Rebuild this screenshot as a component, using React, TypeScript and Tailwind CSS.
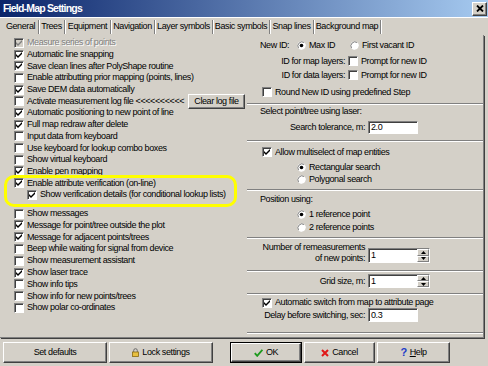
import React from 'react';

type Item = { label: string; checked?: boolean; disabled?: boolean; indent?: boolean; logButton?: boolean };

const groupA: Item[] = [
  { label: 'Measure series of points', checked: true, disabled: true },
  { label: 'Automatic line snapping', checked: true },
  { label: 'Save clean lines after PolyShape routine', checked: true },
  { label: 'Enable attributting prior mapping (points, lines)' },
  { label: 'Save DEM data automatically', checked: true },
  { label: 'Activate measurement log file <<<<<<<<<<', logButton: true },
  { label: 'Automatic positioning to new point of line', checked: true },
  { label: 'Full map redraw after delete', checked: true },
  { label: 'Input data from keyboard' },
  { label: 'Use keyboard for lookup combo boxes' },
  { label: 'Show virtual keyboard' },
  { label: 'Enable pen mapping', checked: true },
  { label: 'Enable attribute verification (on-line)', checked: true },
  { label: 'Show verification details (for conditional lookup lists)', checked: true, indent: true },
];

const groupB: Item[] = [
  { label: 'Show messages' },
  { label: 'Message for point/tree outside the plot', checked: true },
  { label: 'Message for adjacent points/trees', checked: true },
  { label: 'Beep while waiting for signal from device' },
  { label: 'Show measurement assistant' },
  { label: 'Show laser trace', checked: true },
  { label: 'Show info tips' },
  { label: 'Show info for new points/trees' },
  { label: 'Show polar co-ordinates' },
];

const tabs: [string, string][] = [
  ['General', 'w-[35px]'],
  ['Trees', 'w-[25px]'],
  ['Equipment', 'w-[45px]'],
  ['Navigation', 'w-[43px]'],
  ['Layer symbols', 'w-[57px]'],
  ['Basic symbols', 'w-[56px]'],
  ['Snap lines', 'w-[43px]'],
  ['Background map', 'w-[66px]'],
];

function Box({ checked, disabled }: { checked?: boolean; disabled?: boolean }) {
  return (
    <span
      className={`flex items-center justify-center w-[10px] h-[10px] shrink-0 border border-t-[#808080] border-l-[#808080] border-b-white border-r-white shadow-[inset_1px_1px_0_#404040] ${
        disabled ? 'bg-[#d4d0c8]' : 'bg-white'
      }`}
    >
      {checked && (
        <svg width="8" height="8" viewBox="0 0 8 8">
          <path d="M1 3 L3 5 L7 1 L7 3 L3 7 L1 5 Z" fill={disabled ? '#808080' : '#000'} />
        </svg>
      )}
    </span>
  );
}

function Radio({ on }: { on?: boolean }) {
  return (
    <svg width="9" height="9" viewBox="0 0 9 9" className="shrink-0">
      <circle cx="4.5" cy="4.5" r="4" fill="#fff" />
      <path d="M1.7 7.3 A4 4 0 0 1 7.3 1.7" fill="none" stroke="#808080" strokeWidth="1" />
      <path d="M7.3 1.7 A4 4 0 0 1 1.7 7.3" fill="none" stroke="#fff" strokeWidth="1" />
      {on && <circle cx="4.5" cy="4.5" r="1.8" fill="#000" />}
    </svg>
  );
}

function Field({ value, className }: { value: string; className: string }) {
  return (
    <div
      className={`flex items-center pl-[2px] bg-white border border-t-[#808080] border-l-[#808080] border-b-white border-r-white shadow-[inset_1px_1px_0_#404040] ${className}`}
    >
      {value}
    </div>
  );
}

function SpinField({ value, className }: { value: string; className: string }) {
  return (
    <div
      className={`flex bg-white border border-t-[#808080] border-l-[#808080] border-b-white border-r-white shadow-[inset_1px_1px_0_#404040] ${className}`}
    >
      <div className="flex-1 flex items-center pl-[2px]">{value}</div>
      <div className="w-[12px] flex flex-col">
        <div className="flex-1 flex items-center justify-center bg-[#d4d0c8] border border-t-white border-l-white border-b-[#808080] border-r-[#808080]">
          <svg width="5" height="3" viewBox="0 0 5 3">
            <path d="M0 3 L2.5 0 L5 3 Z" fill="#000" />
          </svg>
        </div>
        <div className="flex-1 flex items-center justify-center bg-[#d4d0c8] border border-t-white border-l-white border-b-[#808080] border-r-[#808080]">
          <svg width="5" height="3" viewBox="0 0 5 3">
            <path d="M0 0 L5 0 L2.5 3 Z" fill="#000" />
          </svg>
        </div>
      </div>
    </div>
  );
}

function Separator() {
  return <div className="h-0 shrink-0 border-t border-b border-t-[#808080] border-b-white" />;
}

function LeftRow({ item, h }: { item: Item; h: string }) {
  return (
    <div className={`flex items-center gap-[3px] whitespace-nowrap ${h} ${item.indent ? 'pl-[13px]' : ''}`}>
      <Box checked={item.checked} disabled={item.disabled} />
      {item.logButton ? (
        <>
          <span className="w-[158px]">{item.label}</span>
          <button className="w-[57px] h-[15px] flex items-center justify-center bg-[#d4d0c8] border border-t-white border-l-white border-b-[#404040] border-r-[#404040] shadow-[inset_-1px_-1px_0_#808080]">
            Clear log file
          </button>
        </>
      ) : (
        <span className={item.disabled ? 'text-[#808080] [text-shadow:1px_1px_0_#fff]' : ''}>{item.label}</span>
      )}
    </div>
  );
}

const btn =
  'h-[21px] flex items-center justify-center gap-[3px] bg-[#d4d0c8] border border-t-white border-l-white border-b-[#404040] border-r-[#404040] shadow-[inset_-1px_-1px_0_#808080]';

export default function App() {
  return (
    <div className="w-[488px] h-[366px] overflow-hidden bg-[#d4d0c8] flex flex-col font-['Liberation_Sans',Arial,sans-serif] text-[9px] leading-[11px] tracking-[-0.4px] text-black select-none">
      {/* Title bar */}
      <div className="h-[17px] shrink-0 flex items-center bg-[linear-gradient(to_right,#0a246a,#a6caf0)]">
        <span className="pl-[3px] text-white font-bold text-[10.5px] tracking-[-0.8px]">Field-Map Settings</span>
        <div className="ml-auto mr-[1px] w-[15px] h-[14px] flex items-center justify-center bg-[#d4d0c8] border border-t-white border-l-white border-b-[#404040] border-r-[#404040] shadow-[inset_-1px_-1px_0_#808080]">
          <svg width="8" height="7" viewBox="0 0 8 7">
            <path d="M1 0.5 L7 6.5 M7 0.5 L1 6.5" stroke="#000" strokeWidth="1.8" />
          </svg>
        </div>
      </div>

      {/* Tabs */}
      <div className="h-[18px] shrink-0 flex items-center pl-[3px] border-t border-t-white">
        {tabs.map(([name, w]) => (
          <React.Fragment key={name}>
            <div className={`${w} h-[15px] flex items-center justify-center whitespace-nowrap`}>{name}</div>
            <div className="w-px h-[14px] bg-[#808080] shadow-[1px_0_0_#fff]" />
          </React.Fragment>
        ))}
      </div>

      {/* Page */}
      <div className="h-[303px] w-[484px] shrink-0 flex border-r border-b border-r-[#808080] border-b-[#808080] shadow-[1px_1px_0_#404040]">
        {/* Left column */}
        <div className="relative w-[247px] shrink-0 pt-[2px] pl-[14px]">
          {groupA.map((it) => (
            <LeftRow key={it.label} item={it} h="h-[11.7px]" />
          ))}
          <div className="h-[7px]" />
          {groupB.map((it) => (
            <LeftRow key={it.label} item={it} h="h-[11.8px]" />
          ))}
          {/* highlight annotation */}
          <div className="absolute left-[4px] top-[140px] w-[233px] h-[32px] border-[3px] border-[#ffff00] rounded-[10px] pointer-events-none" />
        </div>

        {/* Right column */}
        <div className="flex-1 flex flex-col whitespace-nowrap">
          {/* New ID */}
          <div className="h-[68px] shrink-0 pt-[3px]">
            <div className="h-[14px] flex items-center">
              <span className="w-[50px] pl-[13px]">New ID:</span>
              <div className="w-[53px] flex items-center gap-[3px]">
                <Radio on />
                <span>Max ID</span>
              </div>
              <div className="flex items-center gap-[3px]">
                <Radio />
                <span>First vacant ID</span>
              </div>
            </div>
            <div className="h-[14px] mt-[2px] flex items-center">
              <span className="w-[98px] text-right">ID for map layers:</span>
              <span className="ml-[3px] mr-[3px]">
                <Box />
              </span>
              <span>Prompt for new ID</span>
            </div>
            <div className="h-[14px] flex items-center">
              <span className="w-[98px] text-right">ID for data layers:</span>
              <span className="ml-[3px] mr-[3px]">
                <Box />
              </span>
              <span>Prompt for new ID</span>
            </div>
            <div className="h-[14px] mt-[3px] flex items-center gap-[3px] pl-[15px]">
              <Box />
              <span>Round New ID using predefined Step</span>
            </div>
          </div>
          <Separator />

          {/* Laser */}
          <div className="h-[35px] shrink-0">
            <div className="h-[12px] flex items-center pl-[13px]">Select point/tree using laser:</div>
            <div className="h-[14px] mt-[3px] flex items-center">
              <span className="w-[118px] text-right">Search tolerance, m:</span>
              <Field value="2.0" className="ml-[3px] w-[50px] h-[13px]" />
            </div>
          </div>
          <Separator />

          {/* Multiselect */}
          <div className="h-[47px] shrink-0 pt-[4px]">
            <div className="h-[12px] flex items-center gap-[3px] pl-[15px]">
              <Box checked />
              <span>Allow multiselect of map entities</span>
            </div>
            <div className="h-[12px] mt-[3px] flex items-center gap-[3px] pl-[50px]">
              <Radio on />
              <span>Rectangular search</span>
            </div>
            <div className="h-[12px] flex items-center gap-[3px] pl-[50px]">
              <Radio />
              <span>Polygonal search</span>
            </div>
          </div>
          <Separator />

          {/* Position */}
          <div className="h-[46px] shrink-0 pt-[2px]">
            <div className="h-[12px] flex items-center pl-[13px]">Position using:</div>
            <div className="h-[12px] mt-[3px] flex items-center gap-[3px] pl-[50px]">
              <Radio on />
              <span>1 reference point</span>
            </div>
            <div className="h-[12px] mt-[1px] flex items-center gap-[3px] pl-[50px]">
              <Radio />
              <span>2 reference points</span>
            </div>
          </div>
          <Separator />

          {/* Remeasurements */}
          <div className="h-[31px] shrink-0 pt-[3px]">
            <div className="flex items-end">
              <div className="w-[118px] text-right leading-[11px]">
                <div>Number of remeasurements</div>
                <div>of new points:</div>
              </div>
              <SpinField value="1" className="ml-[3px] mb-[1px] w-[62px] h-[15px]" />
            </div>
          </div>
          <Separator />

          {/* Grid */}
          <div className="h-[21px] shrink-0 pt-[2px]">
            <div className="h-[14px] flex items-center">
              <span className="w-[118px] text-right">Grid size, m:</span>
              <SpinField value="1" className="ml-[3px] w-[62px] h-[14px]" />
            </div>
          </div>
          <Separator />

          {/* Switch */}
          <div className="h-[37px] shrink-0 pt-[2px]">
            <div className="h-[11px] flex items-center gap-[3px] pl-[15px]">
              <Box checked />
              <span>Automatic switch from map to attribute page</span>
            </div>
            <div className="h-[14px] flex items-center">
              <span className="w-[118px] text-right">Delay before switching, sec:</span>
              <Field value="0.3" className="ml-[3px] w-[50px] h-[14px]" />
            </div>
          </div>
          <Separator />
        </div>
      </div>

      {/* Buttons */}
      <div className="flex items-center pt-[4px] pl-[3px]">
        <div className={`${btn} w-[104px]`}>Set defaults</div>
        <div className={`${btn} w-[104px] ml-[2px]`}>
          <svg width="7" height="9" viewBox="0 0 7 9">
            <path d="M1.7 4 V2.5 A1.8 1.8 0 0 1 5.3 2.5 V4" fill="none" stroke="#6a6a6a" strokeWidth="1" />
            <rect x="0.5" y="4" width="6" height="4.5" fill="#e8c040" stroke="#8a6a10" strokeWidth="0.8" />
          </svg>
          <span>Lock settings</span>
        </div>
        <div className="ml-[17px] w-[72px] h-[21px] border border-black">
          <div className="w-full h-full flex items-center justify-center gap-[3px] bg-[#d4d0c8] border border-t-white border-l-white border-b-[#404040] border-r-[#404040] shadow-[inset_-1px_-1px_0_#808080]">
            <svg width="9" height="8" viewBox="0 0 9 8">
              <path d="M0.8 4.2 L3.2 6.8 L8.4 0.8" fill="none" stroke="#1e9a1e" strokeWidth="1.9" />
            </svg>
            <span>OK</span>
          </div>
        </div>
        <div className={`${btn} w-[71px] ml-[2px]`}>
          <svg width="8" height="8" viewBox="0 0 8 8">
            <path d="M1 1 L7 7 M7 1 L1 7" stroke="#e01818" strokeWidth="2" />
          </svg>
          <span>Cancel</span>
        </div>
        <div className={`${btn} w-[73px] ml-[2px]`}>
          <span className="text-[#1c3cc8] font-bold text-[11px]">?</span>
          <span>
            <span className="underline">H</span>elp
          </span>
        </div>
      </div>
    </div>
  );
}
